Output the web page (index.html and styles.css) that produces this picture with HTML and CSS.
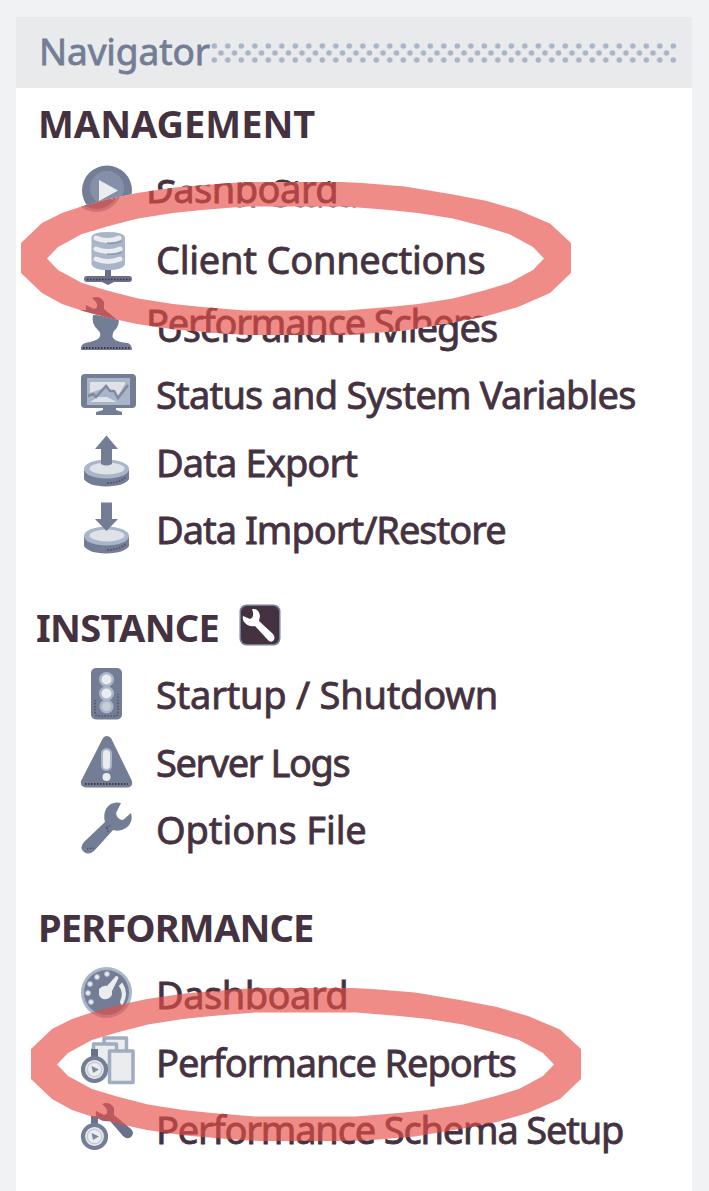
FILE: index.html
```html
<!DOCTYPE html>
<html lang="en">
<head>
<meta charset="utf-8">
<title>Navigator</title>
<link rel="stylesheet" href="styles.css">
</head>
<body>
<svg class="defs" aria-hidden="true">
  <defs>
    <pattern id="grip" width="13.5" height="14" patternUnits="userSpaceOnUse">
      <g fill="#a9b5c8"><circle cx="3.3" cy="3" r="2.8"/><circle cx="10" cy="10" r="2.8"/></g>
    </pattern>
    <symbol id="i-play" viewBox="0 0 60 60">
      <circle cx="31" cy="28.5" r="25" fill="#747d96"/>
      <circle cx="31" cy="26" r="17" fill="#8590a8"/>
      <path d="M23 18V39L42 28.5Z" fill="#ebecee"/>
    </symbol>
    <symbol id="i-client" viewBox="0 0 60 60">
      <path d="M15.500 8Q17 3 32 3Q47 3 49 8V35Q47 41 32 41Q17 41 15.500 35Z" fill="#a9b5c8"/>
      <path d="M20 9Q31 14 43 9M20 20Q32 25 44 20M20 30Q32 35 44 30" stroke="#ebecee" stroke-width="5" fill="none" stroke-linecap="round"/>
      <path d="M31 14Q40 15 46 12M31 25Q40 26 46 23" stroke="#8c98af" stroke-width="1.500" fill="none"/>
      <path d="M29 41H35V47H53Q56 47 56 50Q56 53 53 53H38L32 56L26 53H11Q8 53 8 50Q8 47 11 47H29Z" fill="#6a718a"/>
      <path d="M11 50.500H54" stroke="#453241" stroke-width="1.500" stroke-dasharray="1.500 1.500"/>
    </symbol>
    <symbol id="i-users" viewBox="0 0 60 60">
      <path d="M17 18L42 19Q45 28 38 34Q35 39 38 42Q41 45 52 46Q56 48 56 53H5Q4 48 9 46Q20 44 23 41Q26 37 22 33Q15 27 17 18Z" fill="#747d96"/>
      <path d="M7 51H54" stroke="#453241" stroke-width="2" stroke-dasharray="1.500 1.500"/>
    </symbol>
    <symbol id="i-monitor" viewBox="0 0 60 60">
      <rect x="5" y="10" width="55" height="34" rx="4" fill="#747d96"/>
      <rect x="11" y="14" width="43" height="27" fill="#a9b5c8"/>
      <path d="M14 18H49V20L42 32L31 23L14 29Z" fill="#dfe2e7"/>
      <path d="M14 38L22 33L31 33L41 38Z" fill="#dfe2e7"/>
      <path d="M12 32L17 30L20 33L30 22L34 27H38L42 34L52 21" fill="none" stroke="#7f8aa2" stroke-width="2.500"/>
      <path d="M27 43H40V46L46 48V51H20V48L27 46Z" fill="#747d96"/>
    </symbol>
    <symbol id="i-disc" viewBox="0 0 60 60">
      <path d="M8 38V47Q12 54 30 54.500Q49 54 53 47V38Z" fill="#747d96"/>
      <ellipse cx="30.500" cy="37" rx="22.500" ry="9.500" fill="#a9b5c8"/>
      <ellipse cx="31" cy="36.500" rx="17.500" ry="6" fill="#dfe2e7"/>
      <path d="M31 51Q43 51 50 45" fill="none" stroke="#56506a" stroke-width="2" stroke-dasharray="1.500 1.500"/>
    </symbol>
    <symbol id="i-export" viewBox="0 0 60 60">
      <use href="#i-disc" width="60" height="60"/>
      <path d="M30.500 3.500L42 17H36V32Q30 35 25 32V17H19Z" fill="#747d96"/>
    </symbol>
    <symbol id="i-import" viewBox="0 0 60 60">
      <use href="#i-disc" width="60" height="60"/>
      <path d="M25 3.500H36V20H42L30.500 32L19 20H25Z" fill="#747d96"/>
    </symbol>
    <symbol id="i-signal" viewBox="0 0 60 60">
      <rect x="15" y="4" width="31" height="51.500" rx="5" fill="#747d96"/>
      <path d="M19 36V49Q19 52 23 52H38Q42 52 42 49V30" fill="none" stroke="#56506a" stroke-width="1.500" stroke-dasharray="1.500 1.500"/>
      <g fill="#ebecee" stroke="#a9b5c8" stroke-width="2.500"><circle cx="30.500" cy="15.500" r="6.300"/><circle cx="30.500" cy="29.500" r="6.300"/><circle cx="30.500" cy="42.500" r="5.800" fill="#c5ccd7"/></g>
    </symbol>
    <symbol id="i-warning" viewBox="0 0 60 60">
      <path d="M27 6Q30.500 2 35 6L56 49Q57 55.500 51 55.500H10Q4 55 5 49Z" fill="#747d96"/>
      <path d="M9 52H52" stroke="#453241" stroke-width="2" stroke-dasharray="1.500 1.500"/>
      <rect x="26" y="17" width="9" height="21" rx="4.500" fill="#ebecee" stroke="#a9b5c8" stroke-width="2"/>
      <circle cx="30.500" cy="45" r="4" fill="#ebecee"/>
    </symbol>
    <symbol id="i-wrench" viewBox="0 0 60 60">
      <path d="M45 4Q35 2 30 10Q27 16 29 23L8 43Q3 49 8 53Q13 57 19 51L37 31Q44 33 50 29Q58 23 55 14L47 21Q41 21 40 14Z" fill="#747d96"/>
      <path d="M11 50L18 49M30 29L35 26M32 33L31 27" stroke="#56506a" stroke-width="1.500" stroke-dasharray="1.500 1.500"/>
    </symbol>
    <symbol id="i-gauge" viewBox="0 0 60 60">
      <circle cx="30.500" cy="28.500" r="25.500" fill="#a9b5c8"/>
      <circle cx="30.500" cy="28.500" r="22.500" fill="#747d96"/>
      <path d="M23 25Q27 21 31 22L40 12Q43 12 42 15L36 27Q37 33 31 35Q25 36 23 31Z" fill="#ebecee"/>
      <path d="M46 20Q52 29 46 40L45 38Q49 29 44 22Z" fill="#ebecee" stroke="#ebecee" stroke-width="2"/>
      <g fill="#ebecee" stroke="#a9b5c8"><circle cx="31" cy="10" r="2.500"/><circle cx="21" cy="13" r="2.500"/><circle cx="14" cy="20" r="2.500"/><circle cx="12" cy="29" r="2.500"/><circle cx="15" cy="38" r="2.500"/></g>
    </symbol>
    <symbol id="i-watch" viewBox="0 0 60 60">
      <path d="M15 17H22V26H15Z" fill="#6a718a"/>
      <circle cx="18.500" cy="37.500" r="11.500" fill="#ebecee" stroke="#747d96" stroke-width="4.200"/>
      <circle cx="18.500" cy="37.500" r="7.300" fill="none" stroke="#c5ccd7" stroke-width="1.500"/>
      <path d="M15.500 34L23 37.500L17 41Z" fill="#7f8aa2"/>
    </symbol>
    <symbol id="i-reports" viewBox="0 0 60 60">
      <g fill="#ebecee" stroke="#a0acc0" stroke-width="3.500" stroke-linejoin="round">
        <rect x="28" y="6" width="22.500" height="28"/><rect x="17.500" y="12" width="23" height="22"/>
        <rect x="33.500" y="19" width="23.500" height="31.500"/>
      </g>
      <use href="#i-watch" width="60" height="60"/>
    </symbol>
    <symbol id="i-setup" viewBox="0 0 60 60">
      <path d="M26 5Q34 2 38 9L38 16L55 30Q59 34 55 38Q51 41 47 37L34 22Q27 23 23 20Q19 18 20 12L28 16Q33 15 30 9Z" fill="#6a718a"/>
      <use href="#i-watch" width="60" height="60"/>
    </symbol>
    <path id="ring" fill-rule="evenodd" d="M21 243L42 223L62 213L83 206L107 199.500L137 193L175 187.500L230 183L250 182H342L362 183L405 186.500L453 194.500L487 201L518 210L550 223.500L571 243V273L550 293L518 307L487 316L453 322.500L405 330.500L362 334L342 335H250L230 334L175 329.500L137 324L107 317.500L83 311L62 304L42 293L21 273Z
      M47 258.500L58 270L82 283L107 290.500L138 298.500L173 304L202 307L245 310.500H346L389 307L418 304L453 298.500L484 290.500L509 283L533 270L544 258.500L533 247L509 234L484 226.500L453 218.500L418 213L389 210L346 206.500H245L202 210L173 213L138 218.500L107 226.500L82 234L58 247Z"/>
    <clipPath id="ring-clip"><use href="#ring" clip-rule="evenodd"/></clipPath>
  </defs>
</svg>

<main class="navigator">
  <header class="titlebar">
    <span class="title">Navigator</span>
    <svg class="grip"><rect width="466" height="20" fill="url(#grip)"/></svg>
  </header>

  <section class="group">
    <h2 class="heading management">MANAGEMENT</h2>
    <ul class="list">
      <li class="item"><svg class="icon"><use href="#i-play"/></svg><span class="label server-status">Server Status</span></li>
      <li class="item"><svg class="icon"><use href="#i-client"/></svg><span class="label client">Client Connections</span></li>
      <li class="item"><svg class="icon"><use href="#i-users"/></svg><span class="label users">Users and Privileges</span></li>
      <li class="item"><svg class="icon"><use href="#i-monitor"/></svg><span class="label variables">Status and System Variables</span></li>
      <li class="item"><svg class="icon"><use href="#i-export"/></svg><span class="label export">Data Export</span></li>
      <li class="item"><svg class="icon"><use href="#i-import"/></svg><span class="label import">Data Import/Restore</span></li>
    </ul>
  </section>

  <section class="group">
    <h2 class="heading instance"><span>INSTANCE</span>
      <svg class="badge" viewBox="0 0 42 42"><rect x=".5" y=".5" width="41" height="41" rx="7" fill="#747d96"/><rect x="2" y="2" width="38" height="38" rx="6" fill="#453241"/><path d="M13 5Q20 4 21 12L20 17L34 30Q37 34 34 37Q31 39 28 35L16 22Q10 23 6 19Q3 16 4 12L11 15Q16 13 13 5Z" fill="#fff"/></svg>
    </h2>
    <ul class="list">
      <li class="item"><svg class="icon"><use href="#i-signal"/></svg><span class="label startup">Startup / Shutdown</span></li>
      <li class="item"><svg class="icon"><use href="#i-warning"/></svg><span class="label logs">Server Logs</span></li>
      <li class="item"><svg class="icon"><use href="#i-wrench"/></svg><span class="label options">Options File</span></li>
    </ul>
  </section>

  <section class="group">
    <h2 class="heading performance">PERFORMANCE</h2>
    <ul class="list">
      <li class="item"><svg class="icon"><use href="#i-gauge"/></svg><span class="label dashboard">Dashboard</span></li>
      <li class="item"><svg class="icon"><use href="#i-reports"/></svg><span class="label reports">Performance Reports</span></li>
      <li class="item"><svg class="icon"><use href="#i-setup"/></svg><span class="label setup">Performance Schema Setup</span></li>
    </ul>
  </section>
</main>

<svg class="marks" viewBox="0 0 709 1191">
  <g clip-path="url(#ring-clip)">
    <rect x="20" y="180" width="552" height="157" fill="#fff"/>
    <use href="#i-gauge" x="66" y="158" width="60" height="60"/>
    <use href="#i-reports" x="66" y="225.5" width="60" height="60"/>
    <use href="#i-setup" x="66" y="293" width="60" height="60"/>
    <text class="ghost dashboard" x="146" y="203">Dashboard</text>
    <text class="ghost setup" x="146" y="337">Performance Schema Setup</text>
  </g>
  <use class="ring" href="#ring"/>
  <use class="ring" href="#ring" x="10" y="806"/>
</svg>
</body>
</html>
```
FILE: styles.css
```css
* { box-sizing: border-box; }

body {
  margin: 0;
  width: 709px;
  height: 1191px;
  overflow: hidden;
  position: relative;
  padding: 17px 17px 0 16px;
  background: #f1f2f4;
  color: #453241;
  font-family: "Noto Sans", "Open Sans", sans-serif;
  font-size: 38px;
}

.defs { position: absolute; width: 0; height: 0; }

.navigator { height: 1174px; background: #fff; }

.titlebar {
  display: flex;
  align-items: center;
  height: 71px;
  padding-left: 23px;
  background: #e9eaec;
  color: #747d96;
}

.title {
  width: 172px;
  margin-top: -3px;
  font-size: 37px;
  line-height: 52px;
  letter-spacing: -0.1px;
  white-space: nowrap;
  -webkit-text-stroke: 0.8px #747d96;
}
.grip { width: 466px; height: 20px; }

.group { margin-bottom: 30px; }

.heading {
  display: flex;
  align-items: center;
  gap: 20px;
  height: 67.5px;
  margin: 0;
  padding-left: 22px;
  font-size: 38px;
  font-weight: 700;
  white-space: nowrap;
}

.management { height: 70px; }
.instance { padding-left: 20px; letter-spacing: -0.7px; }
.performance { letter-spacing: -0.8px; }
.badge { width: 42px; height: 42px; margin-top: -4px; }

.list { margin: 0; padding: 0; list-style: none; }

.item {
  display: flex;
  align-items: center;
  gap: 20px;
  height: 67.5px;
  padding-left: 60px;
}

.icon { flex: none; width: 60px; height: 60px; }
.label { white-space: nowrap; -webkit-text-stroke: 0.8px #453241; }

.server-status { letter-spacing: -1.3px; }
.client { letter-spacing: -0.25px; }
.users { letter-spacing: -1px; }
.variables { letter-spacing: -0.8px; }
.export { letter-spacing: -0.9px; }
.import { letter-spacing: -1px; }
.startup { letter-spacing: -0.25px; }
.logs { letter-spacing: -1.4px; }
.options { letter-spacing: -0.1px; }
.dashboard { letter-spacing: -0.5px; }
.reports { letter-spacing: -1.1px; }
.setup { letter-spacing: -1.17px; }

.marks { position: absolute; left: 0; top: 0; width: 709px; height: 1191px; pointer-events: none; }
.ring { fill: #e64e46; fill-opacity: 0.65; }
.ghost { fill: #453241; font-size: 38px; stroke: #453241; stroke-width: 0.8px; }
```
